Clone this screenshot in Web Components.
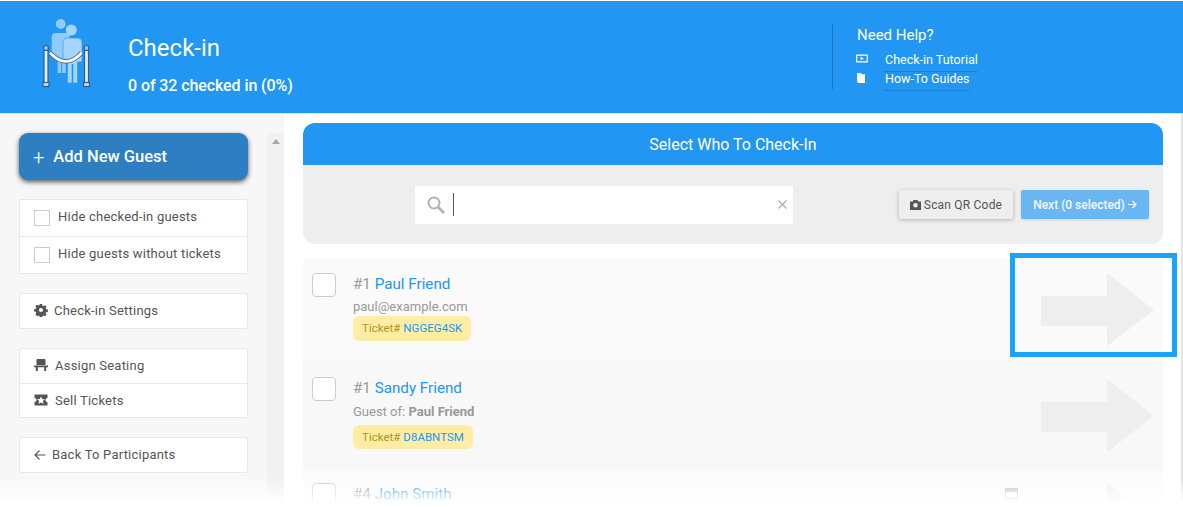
<!DOCTYPE html>
<html>
<head>
<meta charset="utf-8">
<title>Check-in</title>
<style>
    html, body { margin: 0; padding: 0; background: #fff; }
    body { font-family: Roboto, "Liberation Sans", sans-serif; }
</style>
</head>
<body>
<checkin-page>
    <checkin-header slot="header"></checkin-header>

    <side-button slot="side">Add New Guest</side-button>
    <side-card slot="side" style="margin-top:19px">
        <side-item check>Hide checked-in guests</side-item>
        <side-item check>Hide guests without tickets</side-item>
    </side-card>
    <side-card slot="side" style="margin-top:19px">
        <side-item icon="cog">Check-in Settings</side-item>
    </side-card>
    <side-card slot="side" style="margin-top:19px">
        <side-item icon="chair">Assign Seating</side-item>
        <side-item icon="ticket" style="--item-h:33px;--item-pad:1px">Sell Tickets</side-item>
    </side-card>
    <side-card slot="side" style="margin-top:19px">
        <side-item icon="back" style="--item-pad:1px">Back To Participants</side-item>
    </side-card>

    <select-panel slot="main"></select-panel>
    <guest-row slot="main" num="1" name="Paul Friend" ticket="NGGEG4SK" bg="#fafafa" style="--row-h:103px;--box-top:14px;--name-top:15px;--sub-top:5px;--pill-top:1px;--arrow-top:14px;--pill-h:25px">paul@example.com</guest-row>
    <guest-row slot="main" num="1" name="Sandy Friend" ticket="D8ABNTSM" bg="#f8f8f8" style="--row-h:108px;--box-top:15px;--name-top:16px;--sub-top:6px;--pill-top:5px;--arrow-top:17px;--pill-h:24px">Guest of: <b>Paul Friend</b></guest-row>
    <guest-row slot="main" num="4" name="John Smith" bg="#fbfbfb" card style="--row-h:60px;--box-top:13px;--name-top:14px;--sub-top:0;--pill-top:0;--arrow-top:13px;--pill-h:0"></guest-row>
</checkin-page>

<script>
const icons = {
    cog: '<svg viewBox="0 0 14 14" width="14" height="14"><path fill="#555" fill-rule="evenodd" d="M5.600 0h2.800l.4 1.900 1.100.5 1.700-1 1.900 1.900-1 1.700.5 1.100 2 .4v2.800l-2 .4-.5 1.100 1 1.700-1.900 1.900-1.700-1-1.100.5-.4 1.900H5.600l-.4-1.900-1.100-.5-1.700 1L.5 11.900l1-1.700-.5-1.100-2-.4V5.900l2-.4.5-1.100-1-1.700L2.400 .8l1.700 1 1.100-.5zM7 4.600a2.400 2.400 0 1 0 0 4.800 2.400 2.400 0 0 0 0-4.800z" transform="translate(1 1) scale(.857)"/></svg>',
    chair: '<svg viewBox="0 0 14 14" width="14" height="14"><path fill="#555" d="M3.500 1h7a1 1 0 0 1 1 1v5h-9V2a1 1 0 0 1 1-1zM0 7.500h14v1.800H0zM1.800 9.300h2V13h-2zM10.200 9.300h2V13h-2z"/></svg>',
    ticket: '<svg viewBox="0 0 14 12" width="14" height="12"><path fill="#555" fill-rule="evenodd" d="M.5 0.500h13v3.500a2 2 0 0 0 0 4v3.500H.5V8a2 2 0 0 0 0-4zM7 2.500l-1.200 2.500-2.700.3 2 1.800-.6 2.700L7 8.500l2.500 1.300-.6-2.700 2-1.800-2.700-.3z"/></svg>',
    back: '<svg viewBox="0 0 12 12" width="12" height="12"><path fill="none" stroke="#555" stroke-width="1.100" d="M11.500 6H1M5.500 1.500 1 6l4.500 4.500"/></svg>'
}

const pageTemplate = document.createElement('template')
pageTemplate.innerHTML = `
    <style>
        :host {
            display: grid;
            grid-template-columns: 284px 1fr;
            grid-template-rows: 112px 394px;
            position: relative;
            height: 507px;
            padding-top: 1px;
            box-sizing: border-box;
            overflow: hidden;
            background: #fff;
        }
        .head { grid-column: 1 / 3; }
        .side {
            display: flex;
            background: #f7f7f7;
            border-top: 1px solid #d4e3ef;
        }
        .side-in {
            width: 229px;
            padding: 19px 0 0 19px;
            display: flex;
            flex-direction: column;
        }
        .bar {
            width: 17px;
            margin: 19px 0 0 19px;
            background: #f1f1f1;
            position: relative;
        }
        .bar::before {
            content: '';
            position: absolute;
            left: 5px;
            top: 6px;
            border: 4px solid transparent;
            border-top: 0;
            border-bottom: 5px solid #a8a8a8;
        }
        .main {
            display: flex;
            flex-direction: column;
            padding: 9px 18px 0 19px;
            border-right: 2px solid #e4e4e4;
            border-top: 1px solid #d4e3ef;
        }
        .fade {
            position: absolute;
            left: 0;
            right: 0;
            bottom: 0;
            height: 30px;
            background: linear-gradient(rgba(255,255,255,0), #fff 90%);
        }
        .mark {
            position: absolute;
            left: 1010px;
            top: 253px;
            width: 157px;
            height: 94px;
            border: 5px solid #1aa3fb;
        }
    </style>
    <div class="head"><slot name="header"></slot></div>
    <div class="side">
        <div class="side-in"><slot name="side"></slot></div>
        <div class="bar"></div>
    </div>
    <div class="main"><slot name="main"></slot></div>
    <div class="mark"></div>
    <div class="fade"></div>
`
customElements.define('checkin-page',
    class extends HTMLElement {
        constructor () {
            super()
            this.attachShadow({ mode: 'open' })
                .appendChild(pageTemplate.content.cloneNode(true))
        }
    }
)

const headerTemplate = document.createElement('template')
headerTemplate.innerHTML = `
    <style>
        :host {
            display: flex;
            height: 112px;
            background: #2196f3;
            color: #fff;
            box-sizing: border-box;
        }
        .logo { margin: 16px 0 0 40px; width: 52px; height: 72px; flex: none; }
        .title { margin-left: 36px; width: 704px; }
        h1 { margin: 32px 0 0; font-size: 24px; font-weight: 400; line-height: 30px; }
        p { margin: 13px 0 0; font-size: 16px; font-weight: 500; line-height: 20px; letter-spacing: -.09px; }
        .help {
            margin-top: 23px;
            height: 65px;
            padding-left: 24px;
            border-left: 1px solid #1b75bd;
        }
        h2 { margin: 2px 0 0; font-size: 15px; font-weight: 400; line-height: 18px; }
        .link { display: flex; align-items: center; margin-top: 3px; height: 16px; font-size: 12.500px; line-height: 16px; }
        .link:first-of-type { margin-top: 8px; }
        .link svg { flex: none; width: 12px; margin: 0 17px 2px -1px; }
        .dots { border-bottom: 1px dotted #1b6db0; padding-bottom: 3px; margin-top: 3px; }
    </style>
    <svg class="logo" viewBox="0 0 52 72">
        <g fill="#90caf9">
            <circle cx="20.700" cy="7" r="5"/>
            <path d="M11.700 20q0-4 4-4h10q4 0 4 4v19h-4v17h-3.500V41h-1v15h-3.500V39h-6z"/>
        </g>
        <g fill="#a6d5fb">
            <circle cx="31.300" cy="13" r="5.500"/>
            <path d="M23 25q0-4 4-4h11q4 0 4 4v20h-4.500v21h-4.500V47h-1v19h-4.500V45h-4.500z" stroke="#2196f3" stroke-width=".6"/>
        </g>
        <path d="M10 35.700Q26 53 41.700 35.700" fill="none" stroke="#2c5f94" stroke-width="4.500"/>
        <path d="M10 35.700Q26 53 41.700 35.700" fill="none" stroke="#fff" stroke-width="2.800"/>
        <g stroke="#2c5f94" stroke-width="1.200">
            <rect fill="#e4ecf2" x="4" y="33" width="4" height="36"/>
            <rect fill="#e4ecf2" x="44.500" y="33" width="4" height="36"/>
            <rect fill="#cfd8dc" x="3" y="65.500" width="6" height="4"/>
            <rect fill="#cfd8dc" x="43.500" y="65.500" width="6" height="4"/>
            <circle fill="#90caf9" cx="6" cy="31" r="2.500"/>
            <circle fill="#90caf9" cx="46.500" cy="31" r="2.500"/>
        </g>
    </svg>
    <div class="title">
        <h1>Check-in</h1>
        <p>0 of 32 checked in (0%)</p>
    </div>
    <div class="help">
        <h2>Need Help?</h2>
        <div class="link">
            <svg viewBox="0 0 12 10" height="10"><path fill="#fff" fill-rule="evenodd" d="M1 .5h10a1 1 0 0 1 1 1v6a1 1 0 0 1-1 1H1a1 1 0 0 1-1-1v-6a1 1 0 0 1 1-1zM1.300 1.800v5.400h9.400V1.800zM4.500 2.800 8 4.500 4.500 6.200z"/></svg>
            <span class="dots">Check-in Tutorial</span>
        </div>
        <div class="link">
            <svg viewBox="0 0 12 10" height="10"><path fill="#fff" d="M1 0h4l1 1.200h3V10H3q-2 0-2-2z"/></svg>
            <span class="dots">How-To Guides</span>
        </div>
    </div>
`
customElements.define('checkin-header',
    class extends HTMLElement {
        constructor () {
            super()
            this.attachShadow({ mode: 'open' })
                .appendChild(headerTemplate.content.cloneNode(true))
        }
    }
)

const buttonTemplate = document.createElement('template')
buttonTemplate.innerHTML = `
    <style>
        :host {
            display: flex;
            align-items: center;
            height: 47px;
            padding-left: 14px;
            background: #2e7fc1;
            color: #fff;
            font-size: 16.500px;
            font-weight: 500;
            border-radius: 9px;
            box-shadow: 0 2px 5px rgba(0,0,0,.65);
        }
        i { font-style: normal; font-weight: 300; font-size: 20px; margin-right: 9px; line-height: 20px; }
    </style>
    <i>+</i><slot></slot>
`
customElements.define('side-button',
    class extends HTMLElement {
        constructor () {
            super()
            this.attachShadow({ mode: 'open' })
                .appendChild(buttonTemplate.content.cloneNode(true))
        }
    }
)

const cardTemplate = document.createElement('template')
cardTemplate.innerHTML = `
    <style>
        :host {
            display: flex;
            flex-direction: column;
            background: #fff;
            border: 1px solid #e8e8e8;
            border-radius: 2px;
        }
        ::slotted(side-item:not(:first-child)) { border-top: 1px solid #e8e8e8; }
    </style>
    <slot></slot>
`
customElements.define('side-card',
    class extends HTMLElement {
        constructor () {
            super()
            this.attachShadow({ mode: 'open' })
                .appendChild(cardTemplate.content.cloneNode(true))
        }
    }
)

const itemTemplate = document.createElement('template')
itemTemplate.innerHTML = `
    <style>
        :host {
            display: flex;
            align-items: center;
            box-sizing: content-box;
            height: calc(var(--item-h, 34px) - var(--item-pad, 2px));
            padding: 0 0 var(--item-pad, 2px) 14px;
            color: #555;
            font-size: 13px;
            letter-spacing: .22px;
        }
        :host([check]) { height: 33px; padding-bottom: 3px; }
        .box {
            width: 14px;
            height: 14px;
            margin: 3px 8px 0 0;
            border: 1px solid #ccc;
            background: #fff;
        }
        .ico { display: flex; margin-right: 6px; }
        :host([icon="chair"]) .ico, :host([icon="ticket"]) .ico { margin-right: 7px; }
    </style>
    <span class="lead"></span><slot></slot>
`
customElements.define('side-item',
    class extends HTMLElement {
        constructor () {
            super()
            this.attachShadow({ mode: 'open' })
                .appendChild(itemTemplate.content.cloneNode(true))
        }

        connectedCallback () {
            const lead = this.shadowRoot.querySelector('.lead')
            if (this.hasAttribute('check')) {
                lead.className = 'box'
            } else {
                lead.className = 'ico'
                lead.innerHTML = icons[this.getAttribute('icon')]
            }
        }
    }
)

const panelTemplate = document.createElement('template')
panelTemplate.innerHTML = `
    <style>
        :host { display: block; margin-bottom: 15px; }
        h2 {
            margin: 0;
            height: 42px;
            line-height: 44px;
            text-align: center;
            background: #2196f3;
            color: #fff;
            font-size: 16px;
            font-weight: 400;
            border-radius: 12px 12px 0 0;
        }
        .tools {
            display: flex;
            align-items: center;
            height: 79px;
            background: #eee;
            border-radius: 0 0 12px 12px;
            padding-right: 14px;
        }
        .search {
            display: flex;
            align-items: center;
            box-sizing: border-box;
            width: 378px;
            height: 38px;
            margin: 0 106px 0 112px;
            padding: 0 6px 0 12px;
            background: #fff;
            border-radius: 1px;
        }
        .caret { width: 1px; height: 23px; background: #555; margin-left: 8px; }
        .x { margin-left: auto; display: flex; }
        button {
            font: inherit;
            height: 29px;
            border: 0;
            border-radius: 2px;
            font-size: 12px;
            letter-spacing: .2px;
            display: flex;
            align-items: center;
            padding: 0;
            justify-content: center;
            box-shadow: 0 1px 4px rgba(0,0,0,.25);
        }
        .scan { width: 114px; background: #eee; color: #555; }
        .scan svg { margin-right: 3px; }
        .next { width: 128px; margin-left: 8px; background: #6ab6f3; color: #f2f9ff; font-weight: 500; letter-spacing: 0; box-shadow: 0 1px 3px rgba(0,0,0,.12); }
        .next svg { margin-left: 3px; }
    </style>
    <h2>Select Who To Check-In</h2>
    <div class="tools">
        <div class="search">
            <svg width="18" height="18" viewBox="0 0 18 18"><circle cx="7" cy="7" r="5.500" fill="none" stroke="#b2b2b2" stroke-width="2"/><path d="M11 11l6 6" stroke="#b2b2b2" stroke-width="2.600"/></svg>
            <span class="caret"></span>
            <span class="x"><svg width="9" height="9" viewBox="0 0 9 9"><path d="M.5.5l8 8M8.500.5l-8 8" stroke="#aaa" stroke-width="1.100"/></svg></span>
        </div>
        <button class="scan">
            <svg width="11" height="10" viewBox="0 0 11 10"><path fill="#555" fill-rule="evenodd" d="M3.500 0h4l.7 1.500H11V10H0V1.500h2.800zM5.500 3a2.300 2.300 0 1 0 0 4.600 2.300 2.300 0 0 0 0-4.600z"/></svg>
            Scan QR Code
        </button>
        <button class="next">Next (0 selected)<svg width="9" height="9" viewBox="0 0 9 9"><path d="M0 4.500h8M4.500 1 8 4.500 4.500 8" fill="none" stroke="#f2f9ff" stroke-width="1.200"/></svg></button>
    </div>
`
customElements.define('select-panel',
    class extends HTMLElement {
        constructor () {
            super()
            this.attachShadow({ mode: 'open' })
                .appendChild(panelTemplate.content.cloneNode(true))
        }
    }
)

const rowTemplate = document.createElement('template')
rowTemplate.innerHTML = `
    <style>
        :host {
            display: flex;
            height: var(--row-h);
            box-sizing: border-box;
            padding-left: 9px;
            color: #999;
            flex: none;
        }
        .box {
            flex: none;
            box-sizing: border-box;
            width: 24px;
            height: 24px;
            margin-top: var(--box-top);
            background: #fff;
            border: 1px solid #ccc;
            border-radius: 4px;
        }
        .info { flex: 1; margin-left: 17px; padding-top: var(--name-top); }
        .name { font-size: 15.200px; line-height: 20px; color: #999; }
        .name span { color: #2196f3; }
        .sub { margin-top: var(--sub-top); font-size: 13px; line-height: 16px; }
        .pill {
            display: inline-block;
            margin-top: var(--pill-top);
            height: var(--pill-h);
            line-height: var(--pill-h);
            padding: 0 9px;
            background: #ffeda6;
            border-radius: 6px;
            font-size: 11.500px;
            color: #b2960e;
            letter-spacing: .02px;
        }
        .pill span { color: #2196f3; }
        .card { align-self: flex-start; margin: 18px 23px 0 0; display: none; opacity: .6; }
        :host([card]) .card { display: block; }
        .arrow { flex: none; margin: var(--arrow-top) 9px 0 0; }
        :host([card]) .pill { display: none; }
    </style>
    <div class="box"></div>
    <div class="info">
        <div class="name">#<span class="n"></span> <span class="who"></span></div>
        <div class="sub"><slot></slot></div>
        <div class="pill">Ticket# <span class="code"></span></div>
    </div>
    <svg class="card" width="13" height="11" viewBox="0 0 13 11"><path fill="#999" fill-rule="evenodd" d="M0 0h13v11H0zM1 4v6h11V4z"/></svg>
    <svg class="arrow" width="113" height="73" viewBox="0 0 113 73"><path fill="#eee" d="M0 23h66V0l47 37-47 36V53H0z"/></svg>
`
customElements.define('guest-row',
    class extends HTMLElement {
        constructor () {
            super()
            this.attachShadow({ mode: 'open' })
                .appendChild(rowTemplate.content.cloneNode(true))
        }

        connectedCallback () {
            const root = this.shadowRoot
            root.querySelector('.n').style.color = 'inherit'
            root.querySelector('.n').textContent = this.getAttribute('num')
            root.querySelector('.who').textContent = this.getAttribute('name')
            root.querySelector('.code').textContent = this.getAttribute('ticket') || ''
            this.style.background = this.getAttribute('bg')
        }
    }
)
</script>
</body>
</html>
